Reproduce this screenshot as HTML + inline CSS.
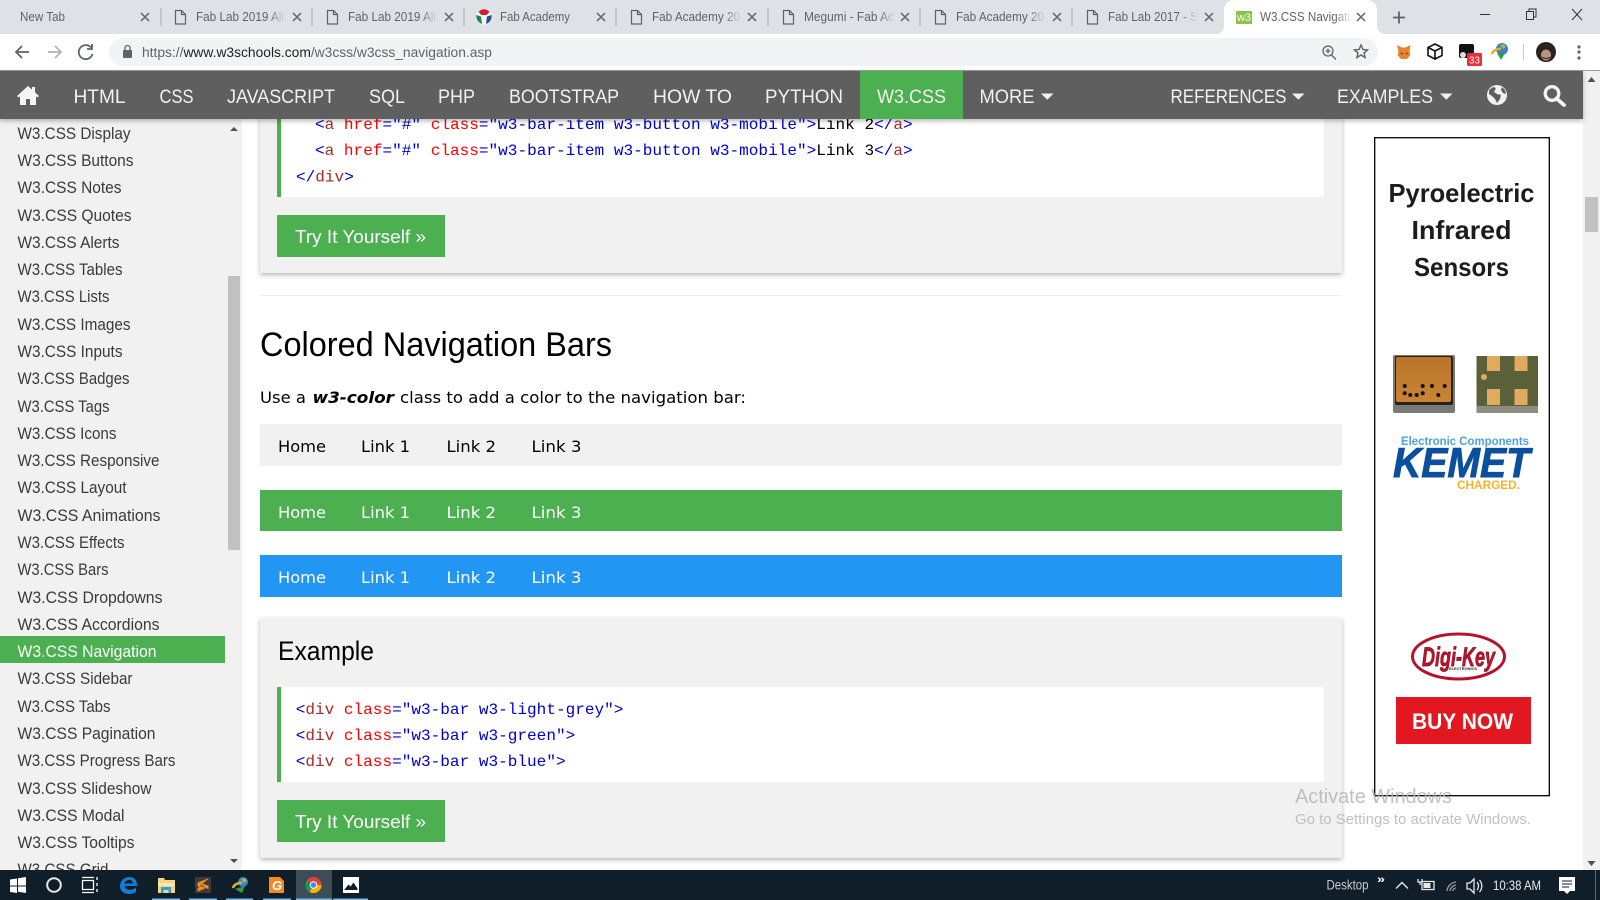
<!DOCTYPE html>
<html lang="en"><head><meta charset="utf-8"><title>W3.CSS Navigation</title>
<style>
html,body{margin:0;padding:0;width:1600px;height:900px;overflow:hidden;background:#fff}
svg{display:block;position:absolute;left:0;top:0}
text{font-family:"Liberation Sans",sans-serif;white-space:pre}
.tab{font-size:12.5px;fill:#5f6368}
.nav{font-size:19px;fill:#f1f1f1}
.side{font-size:17px;fill:#3a3a3a}
.code{font-family:"Liberation Mono",monospace;font-size:16.07px}
.t{fill:#0000cd}.n{fill:#a52a2a}.a{fill:#f00}.k{fill:#000}
.v{font-family:"DejaVu Sans",sans-serif;font-size:16px}
.btn{font-size:18.5px;fill:#fff}
.cl{stroke:#5f6368;stroke-width:1.5;fill:none}
.file{stroke:#5f6368;stroke-width:1.2;fill:none}
</style></head><body>
<svg width="1600" height="900" viewBox="0 0 1600 900" xmlns="http://www.w3.org/2000/svg">
<defs>
<linearGradient id="fd"><stop offset="0" stop-color="#dee1e6" stop-opacity="0"/><stop offset="1" stop-color="#dee1e6"/></linearGradient>
<linearGradient id="fw"><stop offset="0" stop-color="#fff" stop-opacity="0"/><stop offset="1" stop-color="#fff"/></linearGradient>
<linearGradient id="chip" x1="0" y1="0" x2="0" y2="1"><stop offset="0" stop-color="#b9742c"/><stop offset="1" stop-color="#c98433"/></linearGradient>
<filter id="sh" x="-5%" y="-20%" width="110%" height="140%"><feDropShadow dx="0" dy="2" stdDeviation="2.5" flood-color="#000" flood-opacity=".28"/></filter>
</defs>

<!-- tab strip -->
<rect width="1600" height="34" fill="#dee1e6"/>
<path d="M1216 34a8 8 0 0 0 8-8V10a10 10 0 0 1 10-10h133a10 10 0 0 1 10 10v16a8 8 0 0 0 8 8z" fill="#fff"/>
<g stroke="#a9acb1" stroke-width="1">
<path d="M161 8v18M312 8v18M464 8v18M616 8v18M768 8v18M920 8v18M1072 8v18"/>
</g>
<text class="tab" x="20" y="21" textLength="45" lengthAdjust="spacingAndGlyphs">New Tab</text>
<text class="tab" x="196" y="21" textLength="88" lengthAdjust="spacingAndGlyphs">Fab Lab 2019 Ali</text>
<text class="tab" x="348" y="21" textLength="88" lengthAdjust="spacingAndGlyphs">Fab Lab 2019 Ali</text>
<text class="tab" x="500" y="21" textLength="70" lengthAdjust="spacingAndGlyphs">Fab Academy</text>
<text class="tab" x="652" y="21" textLength="88" lengthAdjust="spacingAndGlyphs">Fab Academy 20</text>
<text class="tab" x="804" y="21" textLength="90" lengthAdjust="spacingAndGlyphs">Megumi - Fab Ac</text>
<text class="tab" x="956" y="21" textLength="88" lengthAdjust="spacingAndGlyphs">Fab Academy 20</text>
<text class="tab" x="1108" y="21" textLength="90" lengthAdjust="spacingAndGlyphs">Fab Lab 2017 - S</text>
<text class="tab" x="1260" y="21" textLength="90" lengthAdjust="spacingAndGlyphs">W3.CSS Navigati</text>
<g fill="url(#fd)">
<rect x="268" y="8" width="18" height="18"/><rect x="420" y="8" width="18" height="18"/><rect x="724" y="8" width="18" height="18"/><rect x="878" y="8" width="18" height="18"/><rect x="1028" y="8" width="18" height="18"/><rect x="1180" y="8" width="18" height="18"/>
</g>
<rect x="1334" y="8" width="18" height="18" fill="url(#fw)"/>
<g class="cl">
<path d="M141 13l8 8M149 13l-8 8M293 13l8 8M301 13l-8 8M445 13l8 8M453 13l-8 8M597 13l8 8M605 13l-8 8M748 13l8 8M756 13l-8 8M901 13l8 8M909 13l-8 8M1053 13l8 8M1061 13l-8 8M1205 13l8 8M1213 13l-8 8M1357 13l8 8M1365 13l-8 8"/>
</g>
<g class="file">
<path d="M175.500 10.500h6l4 4v9.500h-10zM181.500 10.500v4h4"/>
<path d="M327.500 10.500h6l4 4v9.500h-10zM333.500 10.500v4h4"/>
<path d="M631.500 10.500h6l4 4v9.500h-10zM637.500 10.500v4h4"/>
<path d="M783.500 10.500h6l4 4v9.500h-10zM789.500 10.500v4h4"/>
<path d="M935.500 10.500h6l4 4v9.500h-10zM941.500 10.500v4h4"/>
<path d="M1087.500 10.500h6l4 4v9.500h-10zM1093.500 10.500v4h4"/>
</g>
<circle cx="484" cy="17" r="8" fill="#f4f4f4"/>
<path d="M478.500 12a6.500 6 0 0 1 11 0l-3 3h-5z" fill="#d22030"/>
<path d="M476.500 15l4.500 1.500 1 7.500a8 8 0 0 1-5.500-9z" fill="#1d8a4a"/>
<path d="M491.500 15l-4.500 1.500-1 7.500a8 8 0 0 0 5.500-9z" fill="#20508a"/>
<rect x="1236" y="11" width="16" height="13" fill="#8bc34a"/>
<text x="1237" y="21" font-size="11" fill="#fff" textLength="14" lengthAdjust="spacingAndGlyphs">w3</text>
<path d="M1399 11.500v12M1393 17.500h12" stroke="#5f6368" stroke-width="1.800" fill="none"/>
<g stroke="#333" stroke-width="1" fill="none">
<path d="M1480 14.500h10"/>
<path d="M1526.500 11.500h7v8h-7zM1529 11.500v-2.500h7v8h-2.500"/>
<path d="M1572 9l10 11M1582 9l-10 11"/>
</g>

<!-- toolbar -->
<rect y="34" width="1600" height="36" fill="#fff"/>
<rect x="0" y="70" width="1600" height="1" fill="#9a9a9a"/>
<rect x="109" y="38" width="1269" height="28" rx="14" fill="#f1f3f4"/>
<g stroke="#5f6368" stroke-width="1.800" fill="none">
<path d="M29 52H16M22 46l-6 6 6 6"/>
<path d="M48 52h13M55 46l6 6-6 6" stroke="#b0b3b7"/>
<path d="M91 47.500a7 7 0 1 0 1.500 6.500M92 44v5h-5"/>
</g>
<rect x="123" y="50" width="9" height="8" rx="1" fill="#5f6368"/>
<path d="M125 50v-2a2.500 2.500 0 0 1 5 0v2" fill="none" stroke="#5f6368" stroke-width="1.300"/>
<text x="142" y="57" font-size="13.5" fill="#5f6368" textLength="350" lengthAdjust="spacingAndGlyphs">https://<tspan fill="#202124">www.w3schools.com</tspan>/w3css/w3css_navigation.asp</text>
<g stroke="#5f6368" stroke-width="1.300" fill="none">
<circle cx="1328" cy="51" r="5"/><path d="M1331.500 55l4.500 4.500M1325.500 51h5M1328 48.500v5"/>
</g>
<path d="M1361 45l1.900 4.500 4.700.4-3.600 3 1.100 4.600-4.100-2.500-4.100 2.500 1.100-4.600-3.600-3 4.700-.4z" fill="none" stroke="#5f6368" stroke-width="1.400"/>
<path d="M1397 45l5 2.500h3.500l5-2.500-1 6.500 1 3.500-3.500 4h-6l-3.500-4 1-3.500z" fill="#e8842c"/>
<path d="M1400.500 53l2.500 1M1405.500 54l2.500-1" stroke="#7a3c10" stroke-width="1"/>
<g fill="none" stroke="#111" stroke-width="1.600"><path d="M1435 44l7 3.500v8l-7 3.500-7-3.500v-8zM1428 47.500l7 3.500 7-3.500M1435 51v9"/></g>
<rect x="1459" y="44" width="15" height="14" rx="2" fill="#111"/>
<circle cx="1463" cy="55" r="3" fill="#ddd"/>
<rect x="1467" y="53" width="15" height="13" rx="1.500" fill="#ed2e38"/>
<text x="1469" y="63.500" font-size="10.500" fill="#fff" textLength="11" lengthAdjust="spacingAndGlyphs">33</text>
<circle cx="1502" cy="49" r="6" fill="#3f7fd0"/>
<path d="M1500 45l4-1 2 3-3 2z" fill="#8bc34a"/>
<path d="M1492 54a8 6 0 0 1 9-5" fill="none" stroke="#e2b030" stroke-width="2.500"/>
<path d="M1497 53h8l-4 7z" fill="#2f9e44"/>
<path d="M1523.500 44v16" stroke="#ccc"/>
<circle cx="1546" cy="52" r="10" fill="#2e221c"/>
<ellipse cx="1546" cy="55" rx="5" ry="5.500" fill="#b8957e"/>
<path d="M1542 57c2 2 6 2 8 0" stroke="#4a342a" stroke-width="1.200" fill="none"/>
<g fill="#5f6368"><circle cx="1579" cy="47" r="1.600"/><circle cx="1579" cy="52" r="1.600"/><circle cx="1579" cy="58" r="1.600"/></g>

<!-- page -->
<rect y="71" width="1600" height="799" fill="#fff"/>
<rect x="1583" y="71" width="17" height="799" fill="#f1f1f1"/>
<rect x="1585" y="197" width="13" height="35" fill="#c1c1c1"/>
<path d="M1591.500 77l4 5h-8z" fill="#505050"/>
<path d="M1591.500 866l4-5h-8z" fill="#505050"/>

<!-- sidebar -->
<rect y="119" width="242" height="751" fill="#f1f1f1"/>
<rect x="228" y="276" width="12" height="274" fill="#c1c1c1"/>
<path d="M234 127l4 4h-8z" fill="#505050"/>
<path d="M234 863l4-4h-8z" fill="#505050"/>
<rect y="636" width="225" height="27" fill="#4caf50"/>
<g>
<text class="side" x="17.500" y="138.800" textLength="113" lengthAdjust="spacingAndGlyphs">W3.CSS Display</text>
<text class="side" x="17.500" y="166" textLength="116" lengthAdjust="spacingAndGlyphs">W3.CSS Buttons</text>
<text class="side" x="17.500" y="193" textLength="104" lengthAdjust="spacingAndGlyphs">W3.CSS Notes</text>
<text class="side" x="17.500" y="221" textLength="114" lengthAdjust="spacingAndGlyphs">W3.CSS Quotes</text>
<text class="side" x="17.500" y="248" textLength="102" lengthAdjust="spacingAndGlyphs">W3.CSS Alerts</text>
<text class="side" x="17.500" y="275" textLength="105" lengthAdjust="spacingAndGlyphs">W3.CSS Tables</text>
<text class="side" x="17.500" y="302" textLength="92" lengthAdjust="spacingAndGlyphs">W3.CSS Lists</text>
<text class="side" x="17.500" y="330" textLength="113" lengthAdjust="spacingAndGlyphs">W3.CSS Images</text>
<text class="side" x="17.500" y="357" textLength="105" lengthAdjust="spacingAndGlyphs">W3.CSS Inputs</text>
<text class="side" x="17.500" y="384" textLength="112" lengthAdjust="spacingAndGlyphs">W3.CSS Badges</text>
<text class="side" x="17.500" y="412" textLength="92" lengthAdjust="spacingAndGlyphs">W3.CSS Tags</text>
<text class="side" x="17.500" y="439" textLength="99" lengthAdjust="spacingAndGlyphs">W3.CSS Icons</text>
<text class="side" x="17.500" y="466" textLength="142" lengthAdjust="spacingAndGlyphs">W3.CSS Responsive</text>
<text class="side" x="17.500" y="493" textLength="109" lengthAdjust="spacingAndGlyphs">W3.CSS Layout</text>
<text class="side" x="17.500" y="521" textLength="143" lengthAdjust="spacingAndGlyphs">W3.CSS Animations</text>
<text class="side" x="17.500" y="548" textLength="107" lengthAdjust="spacingAndGlyphs">W3.CSS Effects</text>
<text class="side" x="17.500" y="575" textLength="91" lengthAdjust="spacingAndGlyphs">W3.CSS Bars</text>
<text class="side" x="17.500" y="603" textLength="145" lengthAdjust="spacingAndGlyphs">W3.CSS Dropdowns</text>
<text class="side" x="17.500" y="630" textLength="142" lengthAdjust="spacingAndGlyphs">W3.CSS Accordions</text>
<text class="side" style="fill:#fff" x="17.500" y="657" textLength="139" lengthAdjust="spacingAndGlyphs">W3.CSS Navigation</text>
<text class="side" x="17.500" y="684" textLength="115" lengthAdjust="spacingAndGlyphs">W3.CSS Sidebar</text>
<text class="side" x="17.500" y="712" textLength="93" lengthAdjust="spacingAndGlyphs">W3.CSS Tabs</text>
<text class="side" x="17.500" y="739" textLength="138" lengthAdjust="spacingAndGlyphs">W3.CSS Pagination</text>
<text class="side" x="17.500" y="766" textLength="158" lengthAdjust="spacingAndGlyphs">W3.CSS Progress Bars</text>
<text class="side" x="17.500" y="794" textLength="134" lengthAdjust="spacingAndGlyphs">W3.CSS Slideshow</text>
<text class="side" x="17.500" y="821" textLength="107" lengthAdjust="spacingAndGlyphs">W3.CSS Modal</text>
<text class="side" x="17.500" y="848" textLength="117" lengthAdjust="spacingAndGlyphs">W3.CSS Tooltips</text>
<text class="side" x="17.500" y="875" textLength="91" lengthAdjust="spacingAndGlyphs">W3.CSS Grid</text>
</g>

<!-- first example card -->
<rect x="260" y="90" width="1082" height="183" fill="#f1f1f1" filter="url(#sh)"/>
<rect x="277" y="100" width="1047" height="97" fill="#fff"/>
<rect x="277" y="100" width="4" height="97" fill="#4caf50"/>
<text class="code" x="315" y="129.200"><tspan class="t">&lt;</tspan><tspan class="n">a</tspan> <tspan class="a">href</tspan><tspan class="t">="#"</tspan> <tspan class="a">class</tspan><tspan class="t">="w3-bar-item w3-button w3-mobile"&gt;</tspan><tspan class="k">Link 2</tspan><tspan class="t">&lt;/</tspan><tspan class="n">a</tspan><tspan class="t">&gt;</tspan></text>
<text class="code" x="315" y="155.200"><tspan class="t">&lt;</tspan><tspan class="n">a</tspan> <tspan class="a">href</tspan><tspan class="t">="#"</tspan> <tspan class="a">class</tspan><tspan class="t">="w3-bar-item w3-button w3-mobile"&gt;</tspan><tspan class="k">Link 3</tspan><tspan class="t">&lt;/</tspan><tspan class="n">a</tspan><tspan class="t">&gt;</tspan></text>
<text class="code" x="296" y="181.500"><tspan class="t">&lt;/</tspan><tspan class="n">div</tspan><tspan class="t">&gt;</tspan></text>
<rect x="277" y="215" width="168" height="42" fill="#4caf50"/>
<text class="btn" x="295" y="243" textLength="131" lengthAdjust="spacingAndGlyphs">Try It Yourself »</text>

<rect x="260" y="295" width="1082" height="1" fill="#eee"/>
<text x="260" y="356" font-size="34" fill="#000" textLength="352" lengthAdjust="spacingAndGlyphs">Colored Navigation Bars</text>
<text class="v" x="260" y="403" textLength="46" lengthAdjust="spacingAndGlyphs">Use a</text>
<text class="v" x="312.500" y="403" font-weight="bold" font-style="italic" textLength="81.500" lengthAdjust="spacingAndGlyphs">w3-color</text>
<text class="v" x="400" y="403" textLength="346" lengthAdjust="spacingAndGlyphs">class to add a color to the navigation bar:</text>

<!-- colour bars -->
<rect x="260" y="424" width="1082" height="42" fill="#f1f1f1"/>
<rect x="260" y="490" width="1082" height="41" fill="#4caf50"/>
<rect x="260" y="555" width="1082" height="42" fill="#2196f3"/>
<g>
<text class="v" fill="#000" x="278" y="452" textLength="48" lengthAdjust="spacingAndGlyphs">Home</text>
<text class="v" fill="#000" x="361" y="452" textLength="49" lengthAdjust="spacingAndGlyphs">Link 1</text>
<text class="v" fill="#000" x="446.500" y="452" textLength="49.500" lengthAdjust="spacingAndGlyphs">Link 2</text>
<text class="v" fill="#000" x="531.500" y="452" textLength="50" lengthAdjust="spacingAndGlyphs">Link 3</text>
<text class="v" fill="#fff" x="278" y="518" textLength="48" lengthAdjust="spacingAndGlyphs">Home</text>
<text class="v" fill="#fff" x="361" y="518" textLength="49" lengthAdjust="spacingAndGlyphs">Link 1</text>
<text class="v" fill="#fff" x="446.500" y="518" textLength="49.500" lengthAdjust="spacingAndGlyphs">Link 2</text>
<text class="v" fill="#fff" x="531.500" y="518" textLength="50" lengthAdjust="spacingAndGlyphs">Link 3</text>
<text class="v" fill="#fff" x="278" y="583" textLength="48" lengthAdjust="spacingAndGlyphs">Home</text>
<text class="v" fill="#fff" x="361" y="583" textLength="49" lengthAdjust="spacingAndGlyphs">Link 1</text>
<text class="v" fill="#fff" x="446.500" y="583" textLength="49.500" lengthAdjust="spacingAndGlyphs">Link 2</text>
<text class="v" fill="#fff" x="531.500" y="583" textLength="50" lengthAdjust="spacingAndGlyphs">Link 3</text>
</g>

<!-- second example card -->
<rect x="260" y="618" width="1082" height="240" fill="#f1f1f1" filter="url(#sh)"/>
<text x="278" y="660" font-size="26.500" fill="#000" textLength="96" lengthAdjust="spacingAndGlyphs">Example</text>
<rect x="277" y="687" width="1047" height="95" fill="#fff"/>
<rect x="277" y="687" width="4" height="95" fill="#4caf50"/>
<text class="code" x="295.700" y="714.200"><tspan class="t">&lt;</tspan><tspan class="n">div</tspan> <tspan class="a">class</tspan><tspan class="t">="w3-bar w3-light-grey"&gt;</tspan></text>
<text class="code" x="295.700" y="740.200"><tspan class="t">&lt;</tspan><tspan class="n">div</tspan> <tspan class="a">class</tspan><tspan class="t">="w3-bar w3-green"&gt;</tspan></text>
<text class="code" x="295.700" y="765.800"><tspan class="t">&lt;</tspan><tspan class="n">div</tspan> <tspan class="a">class</tspan><tspan class="t">="w3-bar w3-blue"&gt;</tspan></text>
<rect x="277" y="800" width="168" height="42" fill="#4caf50"/>
<text class="btn" x="295" y="828" textLength="131" lengthAdjust="spacingAndGlyphs">Try It Yourself »</text>

<!-- ad -->
<rect x="1374.700" y="137.700" width="174.600" height="658" fill="#fff" stroke="#000" stroke-width="1.300"/>
<g fill="#1c1c1c" font-weight="bold" font-size="26">
<text x="1388.500" y="202" textLength="146" lengthAdjust="spacingAndGlyphs">Pyroelectric</text>
<text x="1411.500" y="239" textLength="100" lengthAdjust="spacingAndGlyphs">Infrared</text>
<text x="1414" y="276" textLength="95" lengthAdjust="spacingAndGlyphs">Sensors</text>
</g>
<rect x="1393" y="355" width="62" height="58" rx="2" fill="#7a7a76"/>
<rect x="1395" y="356" width="58" height="49" rx="2" fill="#2a2118"/>
<rect x="1396" y="357" width="55" height="45" rx="2" fill="url(#chip)"/>
<g fill="#111"><circle cx="1404.700" cy="386" r="2"/><circle cx="1422.700" cy="386" r="2"/><circle cx="1432" cy="386" r="2"/><circle cx="1444.700" cy="386" r="2"/><circle cx="1404.700" cy="393.300" r="2"/><circle cx="1410.300" cy="395" r="2"/><circle cx="1416.700" cy="395" r="2"/><circle cx="1422.700" cy="393.300" r="2"/><circle cx="1438.300" cy="395" r="2"/></g>
<rect x="1476.500" y="356" width="61.500" height="57" fill="#5a6138"/>
<rect x="1476.500" y="406" width="61.500" height="7" fill="#8d8d80"/>
<g fill="#e0aa5f"><rect x="1487" y="356" width="13" height="15"/><rect x="1514.500" y="356" width="13" height="15"/><rect x="1487" y="389" width="13" height="16"/><rect x="1514.500" y="389" width="13" height="16"/><circle cx="1484" cy="377" r="3"/></g>
<text x="1401" y="445" font-size="11.500" font-weight="bold" fill="#4aa3df" textLength="128" lengthAdjust="spacingAndGlyphs">Electronic Components</text>
<text x="1393" y="477" font-size="42" font-weight="bold" font-style="italic" fill="#0b4f9e" stroke="#0b4f9e" stroke-width=".9" textLength="137" lengthAdjust="spacingAndGlyphs">KEMET</text>
<text x="1457" y="489" font-size="12" font-weight="bold" fill="#f5b324" textLength="63" lengthAdjust="spacingAndGlyphs">CHARGED.</text>
<ellipse cx="1458.500" cy="656.500" rx="46" ry="22.500" fill="#fff" stroke="#b51428" stroke-width="3"/>
<text x="1422" y="666" font-size="27" font-weight="bold" font-style="italic" fill="#c8102e" stroke="#6a0a18" stroke-width=".7" textLength="73" lengthAdjust="spacingAndGlyphs">Digi-Key</text>
<text x="1449" y="670" font-size="4" font-weight="bold" fill="#222" textLength="28" lengthAdjust="spacingAndGlyphs">ELECTRONICS</text>
<rect x="1396" y="697" width="135" height="47" fill="#e31720"/>
<text x="1412" y="729" font-size="22" font-weight="bold" fill="#fff" textLength="101" lengthAdjust="spacingAndGlyphs">BUY NOW</text>

<text x="1295" y="803" font-size="20" fill="#b5b5b5" fill-opacity=".85" textLength="157" lengthAdjust="spacingAndGlyphs">Activate Windows</text>
<text x="1295" y="824" font-size="14.600" fill="#b5b5b5" fill-opacity=".85" textLength="236" lengthAdjust="spacingAndGlyphs">Go to Settings to activate Windows.</text>

<!-- top nav -->
<rect y="71" width="1583" height="48" fill="#5f5f5f" filter="url(#sh)"/>
<rect x="860" y="71" width="103" height="48" fill="#4caf50"/>
<path d="M28 86L17 96l1.500 1.500L20 96.300V105h6v-6h4v6h6v-8.700l1.500 1.200L39 96l-4-3.700V87h-3v2.600z" fill="#f4f4f4"/>
<text class="nav" x="73.500" y="102.800" textLength="52" lengthAdjust="spacingAndGlyphs">HTML</text>
<text class="nav" x="159.500" y="102.800" textLength="34" lengthAdjust="spacingAndGlyphs">CSS</text>
<text class="nav" x="227" y="102.800" textLength="108" lengthAdjust="spacingAndGlyphs">JAVASCRIPT</text>
<text class="nav" x="369" y="102.800" textLength="36" lengthAdjust="spacingAndGlyphs">SQL</text>
<text class="nav" x="438" y="102.800" textLength="37" lengthAdjust="spacingAndGlyphs">PHP</text>
<text class="nav" x="509" y="102.800" textLength="110" lengthAdjust="spacingAndGlyphs">BOOTSTRAP</text>
<text class="nav" x="653" y="102.800" textLength="79" lengthAdjust="spacingAndGlyphs">HOW TO</text>
<text class="nav" x="765" y="102.800" textLength="78" lengthAdjust="spacingAndGlyphs">PYTHON</text>
<text class="nav" x="877" y="102.800" textLength="69" lengthAdjust="spacingAndGlyphs">W3.CSS</text>
<text class="nav" x="979.500" y="102.800" textLength="55" lengthAdjust="spacingAndGlyphs">MORE</text>
<text class="nav" x="1170.500" y="102.800" textLength="116" lengthAdjust="spacingAndGlyphs">REFERENCES</text>
<text class="nav" x="1337" y="102.800" textLength="96" lengthAdjust="spacingAndGlyphs">EXAMPLES</text>
<g fill="#f1f1f1"><path d="M1041 93.500h12.500l-6.200 6.200zM1292 93.500h12.500l-6.200 6.200zM1440 93.500h12.500l-6.200 6.200z"/></g>
<circle cx="1497" cy="95" r="10" fill="#f1f1f1"/>
<path d="M1489 90l4-3 3 1-2 4 3 2 4 1-1 4-3 4-2-4-3-3-3-2zM1502 87l3 3 1 4-3-1-2-3z" fill="#5f5f5f"/>
<circle cx="1552" cy="93.500" r="6.800" fill="none" stroke="#f4f4f4" stroke-width="3.300"/>
<path d="M1556.500 98.500l7.500 6.500" stroke="#f4f4f4" stroke-width="3.800" stroke-linecap="round"/>

<!-- taskbar -->
<rect y="870" width="1600" height="30" fill="#101e29"/>
<rect x="296" y="870" width="36" height="30" fill="#3e4c55"/>
<g fill="#76b9ed"><rect x="152" y="898.500" width="28" height="1.500"/><rect x="189" y="898.500" width="28" height="1.500"/><rect x="226" y="898.500" width="27" height="1.500"/><rect x="263" y="898.500" width="28" height="1.500"/><rect x="296" y="898.500" width="36" height="1.500"/><rect x="333" y="898.500" width="35" height="1.500"/></g>
<path d="M10 879.500l7-1v7h-7zM18 878.300l8-1.300v8.500h-8zM10 886.500h7v6.500l-7-1zM18 886.500h8v6.500l-8-1.200z" fill="#fff"/>
<circle cx="54" cy="885" r="6.800" fill="none" stroke="#e8e8e8" stroke-width="2"/>
<g fill="none" stroke="#fff" stroke-width="1.300"><path d="M82.500 880.500h11v9h-11zM82 877.500h12M82 892.500h12M97 877v3M97 883v3M97 889v3"/></g>
<path d="M129.500 877c-5.500 0-9.500 4-9.500 9s4 8 9 8c2.500 0 5-.7 7-2v-4.500c-2 1.500-4 2.300-6 2.300-2.800 0-5-1.300-5.300-3.800h12.300c.2-5.700-2.500-9-7.500-9zm-5.200 6.500c.3-2 2.600-3.500 5-3.500s3.700 1.500 3.700 3.500z" fill="#0f7fd8"/>
<path d="M158 878h6l1 2h10v13h-17z" fill="#f5d67a"/>
<path d="M158 883h17v3h-17z" fill="#fbe8ae"/>
<path d="M161 887h10v6h-2.500v-3h-5v3H161z" fill="#2f9be0"/>
<rect x="195" y="877" width="16" height="16" fill="#3b3b3b"/>
<path d="M208 879l-10 4v3l7 2-7 3v-3M198 883l10 3v3" fill="#f58c1e" stroke="#f58c1e" stroke-width="1"/>
<circle cx="243" cy="882" r="5" fill="#3f7fd0"/>
<path d="M241 879l4-1 2 3-3 2z" fill="#8bc34a"/>
<path d="M233 888a8 6 0 0 1 9-5" fill="none" stroke="#e2b030" stroke-width="2.500"/>
<path d="M235 889l10-3-3 7z" fill="#2f9e44"/>
<path d="M269 877h11l4 4v12h-15z" fill="#f78a1e"/>
<text x="272" y="890" font-size="13" font-weight="bold" font-style="italic" fill="#fff">G</text>
<circle cx="313.500" cy="885" r="8" fill="#db4437"/>
<path d="M313.500 885l-4 7a8 8 0 0 1-3-11z" fill="#0f9d58"/>
<path d="M313.500 885l8 0a8 8 0 0 1-12 7z" fill="#f4b400"/>
<circle cx="313.500" cy="885" r="3.800" fill="#fff"/><circle cx="313.500" cy="885" r="2.800" fill="#4285f4"/>
<rect x="343" y="877" width="16" height="16" fill="#fff"/>
<path d="M344.500 889.500l4-5 2 2 3-4 4 6v1.500h-13z" fill="#101e29"/>

<text x="1326.500" y="889.500" font-size="13.500" fill="#c9c9c9" textLength="42" lengthAdjust="spacingAndGlyphs">Desktop</text>
<text x="1377" y="883" font-size="11" fill="#fff" font-weight="bold" textLength="8" lengthAdjust="spacingAndGlyphs">»</text>
<path d="M1396 888.500l6-6 6 6" fill="none" stroke="#e8e8e8" stroke-width="1.400"/>
<g fill="none" stroke="#e8e8e8" stroke-width="1.300">
<rect x="1422" y="881.500" width="12" height="8"/><path d="M1418 879v3h4v-3M1420 882v3"/>
<path d="M1447 891a10 10 0 0 1 9-9M1450 891a7 7 0 0 1 6-6M1453 891a3 3 0 0 1 3-3" stroke="#9a9a9a"/>
<path d="M1467 883h3l4-4v14l-4-4h-3zM1477 882a6 6 0 0 1 0 8M1479.500 880a9 9 0 0 1 0 12"/>
</g>
<rect x="1423.500" y="883" width="7" height="5" fill="#e8e8e8"/>
<text x="1493" y="889.800" font-size="13.500" fill="#e8e8e8" textLength="48" lengthAdjust="spacingAndGlyphs">10:38 AM</text>
<path d="M1559 877h16v14h-5l-3 3-3-3h-5z" fill="#fff"/>
<path d="M1562 881h10M1562 884h10M1562 887h7" stroke="#101e29" stroke-width="1"/>
<rect x="1595" y="870" width="1" height="30" fill="#5a6670"/>
</svg>
</body></html>
